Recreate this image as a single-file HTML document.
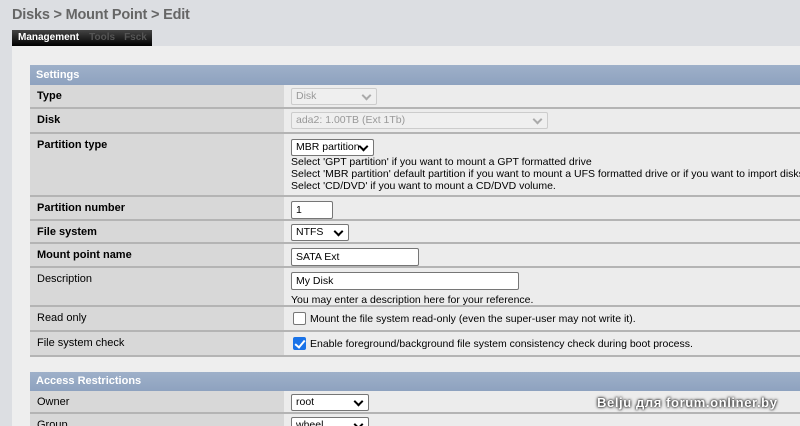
<!DOCTYPE html>
<html><head><meta charset="utf-8"><style>
*{margin:0;padding:0;box-sizing:border-box}
html,body{overflow:hidden}
body{width:800px;height:426px;overflow:hidden;background:#dcdee2;font-family:"Liberation Sans",Tahoma,sans-serif;font-size:11px;color:#000;position:relative}
.a{position:absolute}
h1{position:absolute;left:12px;top:7px;font-size:14.5px;color:#666;font-weight:bold;letter-spacing:-0.2px}
.tabs{left:12px;top:30px;width:140px;height:16px;background:linear-gradient(#444,#000);font-size:10px;font-weight:bold;color:#555;line-height:16px;padding-left:6px;white-space:nowrap}
.tabs b{color:#fff;margin-right:10px}.tabs span{margin-right:9px}
.panel{left:12px;top:46px;width:788px;height:380px;background:#eeeeee}
.hd{left:30px;width:770px;background:linear-gradient(#9eb0c9,#8ea2bf);color:#fff;font-weight:bold;padding-left:6px;line-height:20px;height:20px}
.row{left:30px;width:770px;border-bottom:2px solid #b4b4b4;overflow:hidden}
.l{position:absolute;left:0;top:0;bottom:0;width:254px;background:#d8d8d8;padding:5px 0 0 7px}
.l.b{font-weight:bold}
.v{position:absolute;left:254px;top:0;bottom:0;right:0;background:#ececec;padding:4px 0 0 7px;line-height:12px;white-space:nowrap;overflow:hidden;font-size:10.5px}
.sel{display:inline-block;border:1px solid #767676;border-radius:2px;background:#fff;height:17px;line-height:15px;padding-left:4px;position:relative;vertical-align:top}
.sel:after{content:"";position:absolute;right:6px;top:3px;width:5px;height:5px;border-right:2px solid #000;border-bottom:2px solid #000;transform:rotate(45deg)}
.dis{border-color:#ccc;color:#999;background:#efefef}.dis:after{border-color:#aaa}
.inp{display:inline-block;border:1px solid #767676;border-radius:2px;background:#fff;height:18px;line-height:16px;padding-left:4px}
.cb{display:inline-block;width:13px;height:13px;border:1px solid #777;border-radius:2px;background:#fff;vertical-align:-3px;margin:0 4px 0 2px}
.cb.on{background:#1a73e8;border-color:#1a73e8;position:relative}
.cb.on:after{content:"";position:absolute;left:3px;top:0px;width:4px;height:8px;border-right:2px solid #fff;border-bottom:2px solid #fff;transform:rotate(40deg)}
.wm{left:597px;top:395px;color:#fff;font-weight:bold;font-size:13px;letter-spacing:0.6px;text-shadow:0 0 2px #000,0 0 3px #333;white-space:nowrap}
</style></head><body>
<h1>Disks &gt; Mount Point &gt; Edit</h1>
<div class="a tabs"><b>Management</b><span>Tools</span><span>Fsck</span></div>
<div class="a panel"></div>
<div class="a hd" style="top:65px">Settings</div>
<div class="a row" style="top:85px;height:24px"><div class="l b">Type</div><div class="v" style="padding-top:3px"><span class="sel dis" style="width:86px">Disk</span></div></div>
<div class="a row" style="top:109px;height:25px"><div class="l b">Disk</div><div class="v" style="padding-top:3px"><span class="sel dis" style="width:257px">ada2: 1.00TB (Ext 1Tb)</span></div></div>
<div class="a row" style="top:134px;height:63px"><div class="l b">Partition type</div><div class="v" style="padding-top:5px"><span class="sel" style="width:83px;display:block">MBR partition</span>Select 'GPT partition' if you want to mount a GPT formatted drive<br>Select 'MBR partition' default partition if you want to mount a UFS formatted drive or if you want to import disks from<br>Select 'CD/DVD' if you want to mount a CD/DVD volume.</div></div>
<div class="a row" style="top:197px;height:24px"><div class="l b">Partition number</div><div class="v"><span class="inp" style="width:42px">1</span></div></div>
<div class="a row" style="top:221px;height:23px"><div class="l b">File system</div><div class="v" style="padding-top:3px"><span class="sel" style="width:58px">NTFS</span></div></div>
<div class="a row" style="top:244px;height:24px"><div class="l b">Mount point name</div><div class="v"><span class="inp" style="width:128px">SATA Ext</span></div></div>
<div class="a row" style="top:268px;height:39px"><div class="l">Description</div><div class="v"><span class="inp" style="width:228px;margin-bottom:4px">My Disk</span><br>You may enter a description here for your reference.</div></div>
<div class="a row" style="top:307px;height:25px"><div class="l">Read only</div><div class="v" style="padding-top:5px"><span class="cb"></span>Mount the file system read-only (even the super-user may not write it).</div></div>
<div class="a row" style="top:332px;height:25px"><div class="l">File system check</div><div class="v" style="padding-top:5px"><span class="cb on"></span>Enable foreground/background file system consistency check during boot process.</div></div>
<div class="a hd" style="top:372px;height:19px;line-height:19px">Access Restrictions</div>
<div class="a row" style="top:391px;height:23px"><div class="l">Owner</div><div class="v" style="padding-top:3px"><span class="sel" style="width:78px">root</span></div></div>
<div class="a row" style="top:414px;height:12px;border-bottom:0"><div class="l">Group</div><div class="v" style="padding-top:3px"><span class="sel" style="width:78px">wheel</span></div></div>
<div class="a wm">Belju для forum.onliner.by</div>
</body></html>
